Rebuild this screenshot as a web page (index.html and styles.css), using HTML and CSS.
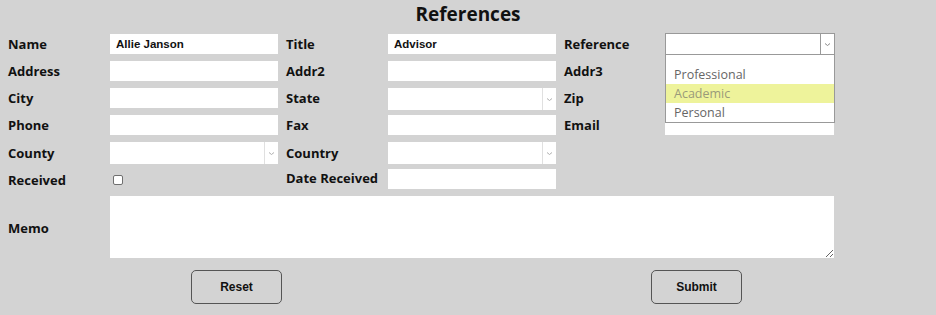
FILE: index.html
```html
<!DOCTYPE html>
<html lang="en">
<head>
	<meta charset="UTF-8">
	<meta name="viewport" content="width=device-width, initial-scale=1.0">
	<title>References</title>
	<link rel="stylesheet" href="styles.css">
</head>
<body>
	<h1 class="title">References</h1>
	<form class="form">
		<label class="label" for="name">Name</label>
		<input type="text" class="input" id="name" value="Allie Janson">
		<label class="label" for="title">Title</label>
		<input type="text" class="input" id="title" value="Advisor">
		<label class="label" for="reference">Reference</label>
		<div class="select open wide">
			<select id="reference"><option></option><option>Professional</option><option>Academic</option><option>Personal</option></select>
			<span class="arrow"><svg width="7" height="5" viewBox="0 0 7 5"><path d="M1 1.5 3.5 3.5 6 1.5" fill="none" stroke="#8a8a8a" stroke-width="1"/></svg></span>
			<ul class="options">
				<li>Professional</li>
				<li class="hover">Academic</li>
				<li>Personal</li>
			</ul>
		</div>

		<label class="label" for="address">Address</label>
		<input type="text" class="input" id="address">
		<label class="label" for="addr2">Addr2</label>
		<input type="text" class="input" id="addr2">
		<label class="label" for="addr3">Addr3</label>
		<input type="text" class="input wide" id="addr3">

		<label class="label" for="city">City</label>
		<input type="text" class="input" id="city">
		<label class="label" for="state">State</label>
		<div class="select">
			<select id="state"><option></option></select>
			<span class="arrow"><svg width="7" height="5" viewBox="0 0 7 5"><path d="M1 1.5 3.5 3.5 6 1.5" fill="none" stroke="#b0b0b0" stroke-width="1"/></svg></span>
		</div>
		<label class="label" for="zip">Zip</label>
		<input type="text" class="input wide" id="zip">

		<label class="label" for="phone">Phone</label>
		<input type="text" class="input" id="phone">
		<label class="label" for="fax">Fax</label>
		<input type="text" class="input" id="fax">
		<label class="label" for="email">Email</label>
		<input type="text" class="input wide" id="email">

		<label class="label" for="county">County</label>
		<div class="select">
			<select id="county"><option></option></select>
			<span class="arrow"><svg width="7" height="5" viewBox="0 0 7 5"><path d="M1 1.5 3.5 3.5 6 1.5" fill="none" stroke="#b0b0b0" stroke-width="1"/></svg></span>
		</div>
		<label class="label" for="country">Country</label>
		<div class="select">
			<select id="country"><option></option></select>
			<span class="arrow"><svg width="7" height="5" viewBox="0 0 7 5"><path d="M1 1.5 3.5 3.5 6 1.5" fill="none" stroke="#b0b0b0" stroke-width="1"/></svg></span>
		</div>
		<span></span><span></span>

		<label class="label" for="received">Received</label>
		<div class="check"><input type="checkbox" id="received"></div>
		<label class="label date" for="date">Date Received</label>
		<input type="text" class="input date" id="date">
		<span></span><span></span>

		<label class="label" for="memo">Memo</label>
		<textarea class="memo" id="memo"></textarea>
	</form>
	<div class="buttons">
		<button type="reset" class="button">Reset</button>
		<button type="submit" class="button">Submit</button>
	</div>
</body>
</html>
```

FILE: styles.css
```css
body {
	margin: 0;
	padding: 0 8px;
	background: #d3d3d3;
	font-family: 'Open Sans', sans-serif;
	color: #111;
}
.title {
	margin: 1px 0 7px;
	font-size: 19px;
	line-height: 26px;
	text-align: center;
	font-weight: bold;
}
.form {
	display: grid;
	grid-template-columns: 102px 176px 102px 176px 101px 170px;
	grid-template-rows: 20px 20px 20px 20px 21px 20px 62px;
	row-gap: 7px;
}
.label {
	align-self: center;
	font-size: 13px;
	font-weight: bold;
	white-space: nowrap;
}
.label.date {
	margin-top: -5px;
}
.input {
	box-sizing: border-box;
	width: 168px;
	height: 20px;
	border: none;
	padding: 0 6px;
	background: white;
	font-family: 'Liberation Sans', Arial, sans-serif;
	font-size: 11.5px;
	font-weight: bold;
	color: #111;
	outline: none;
}
.input.wide {
	width: 169px;
}
.input.date {
	margin-top: -1px;
}
.select {
	position: relative;
	box-sizing: border-box;
	display: flex;
	width: 168px;
	height: 22px;
	align-self: start;
	background: white;
}
.select select {
	flex: 1;
	appearance: none;
	-webkit-appearance: none;
	border: none;
	background: transparent;
	outline: none;
}
.arrow {
	display: flex;
	align-items: center;
	justify-content: center;
	width: 13px;
	border-left: 1px solid #e0e0e0;
}
.select.open {
	width: 170px;
	align-self: center;
	border: 1px solid #999;
}
.select.open .arrow {
	border-left-color: #999;
}
.options {
	position: absolute;
	top: 21px;
	left: -1px;
	right: -1px;
	margin: 0;
	padding: 10px 0 0;
	list-style: none;
	background: white;
	border: 1px solid #999;
	border-top: none;
	z-index: 10;
}
.options li {
	height: 19px;
	line-height: 19px;
	padding-left: 8px;
	font-size: 12.5px;
	color: #666;
}
.options li.hover {
	background: #eef39b;
	color: #9a9a7a;
}
.check {
	display: flex;
	align-items: center;
}
.check input {
	appearance: none;
	-webkit-appearance: none;
	box-sizing: border-box;
	width: 10px;
	height: 10px;
	margin: 0 0 0 3px;
	border: 1px solid #6f6f6f;
	border-radius: 2px;
	background: white;
}
.memo {
	grid-column: 2 / 7;
	box-sizing: border-box;
	width: 724px;
	height: 62px;
	margin-top: -1px;
	border: none;
	background: white;
	outline: none;
}
.buttons {
	display: flex;
	justify-content: space-between;
	padding: 0 186px 0 183px;
	margin-top: 11px;
}
.button {
	width: 91px;
	height: 34px;
	border: 1px solid #555;
	border-radius: 5px;
	background: transparent;
	font-family: 'Liberation Sans', Arial, sans-serif;
	font-size: 12px;
	font-weight: bold;
	color: #111;
}
```
